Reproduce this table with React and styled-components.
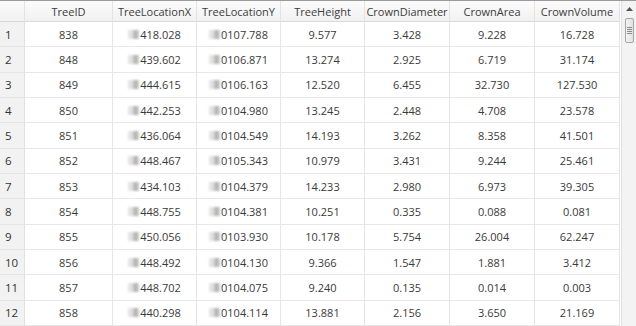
import React from "react";
import styled, { createGlobalStyle } from "styled-components";

const Global = createGlobalStyle`
  html, body { margin: 0; padding: 0; background: #fff; }
  body { font-family: "Open Sans", "Noto Sans", sans-serif; }
`;

const COLS = "25px 88px 84px 84px 84px 85px 85px 85px";

const Frame = styled.div`
  width: 636px;
  height: 326px;
  display: flex;
  flex-direction: column;
  border-top: 1px solid #9a9a9a;
  box-sizing: border-box;
  overflow: hidden;
  color: #3a3a3a;
  font-size: 11px;
`;

const Body = styled.div`
  flex: 1;
  display: flex;
  min-height: 0;
`;

const Grid = styled.div`
  width: 621px;
  display: grid;
  grid-template-columns: ${COLS};
  grid-template-rows: 21px;
  grid-auto-rows: 25.33px;
  align-content: start;
  border-right: 1px solid #e2e2e2;
`;

const HeadCell = styled.div`
  box-sizing: border-box;
  display: flex;
  align-items: center;
  justify-content: center;
  background: linear-gradient(#fbfbfb, #f1f1f1);
  border-right: 1px solid #e3e3e3;
  border-bottom: 1px solid #d9d9d9;
  white-space: nowrap;
  color: #3c3c3c;
`;

const RowHead = styled.div`
  box-sizing: border-box;
  display: flex;
  align-items: center;
  padding-left: 5px;
  background: #f2f2f2;
  border-right: 1px solid #e0e0e0;
  border-bottom: 1px solid #e4e4e4;
  color: #333;
  font-size: 11.5px;
`;

const Cell = styled.div`
  box-sizing: border-box;
  display: flex;
  align-items: center;
  justify-content: center;
  border-right: 1px solid #e6e6e6;
  border-bottom: 1px solid #e8e8e8;
  white-space: nowrap;
  color: #3a3a3a;
`;

const Mask = styled.span`
  display: inline-block;
  width: 11px;
  height: 9px;
  margin-right: 1px;
  background: linear-gradient(
    90deg,
    #e4e4e4 0 35%,
    #d2d2d2 35% 55%,
    #b4b4b4 55% 85%,
    #c8c8c8 85% 100%
  );
  filter: blur(0.8px);
`;

const Scroll = styled.div`
  width: 14px;
  flex-shrink: 0;
  background: #f3f3f3;
  display: flex;
  flex-direction: column;
  align-items: center;
`;

const Arrow = styled.div`
  height: 15px;
  width: 100%;
  display: flex;
  align-items: center;
  justify-content: center;
`;

const Thumb = styled.div`
  margin-top: 2px;
  width: 9px;
  height: 25px;
  box-sizing: border-box;
  border: 1px solid #a6a6a6;
  border-radius: 2px;
  background: linear-gradient(90deg, #f4f4f4, #e2e2e2);
  display: flex;
  flex-direction: column;
  align-items: center;
  justify-content: center;
  gap: 1px;
`;

const Grip = styled.span`
  width: 5px;
  height: 1px;
  background: #8a8a8a;
`;

const headers = [
  "TreeID",
  "TreeLocationX",
  "TreeLocationY",
  "TreeHeight",
  "CrownDiameter",
  "CrownArea",
  "CrownVolume",
];

const rows = [
  ["838", "418.028", "0107.788", "9.577", "3.428", "9.228", "16.728"],
  ["848", "439.602", "0106.871", "13.274", "2.925", "6.719", "31.174"],
  ["849", "444.615", "0106.163", "12.520", "6.455", "32.730", "127.530"],
  ["850", "442.253", "0104.980", "13.245", "2.448", "4.708", "23.578"],
  ["851", "436.064", "0104.549", "14.193", "3.262", "8.358", "41.501"],
  ["852", "448.467", "0105.343", "10.979", "3.431", "9.244", "25.461"],
  ["853", "434.103", "0104.379", "14.233", "2.980", "6.973", "39.305"],
  ["854", "448.755", "0104.381", "10.251", "0.335", "0.088", "0.081"],
  ["855", "450.056", "0103.930", "10.178", "5.754", "26.004", "62.247"],
  ["856", "448.492", "0104.130", "9.366", "1.547", "1.881", "3.412"],
  ["857", "448.702", "0104.075", "9.240", "0.135", "0.014", "0.003"],
  ["858", "440.298", "0104.114", "13.881", "2.156", "3.650", "21.169"],
];

export default function App() {
  return (
    <>
      <Global />
      <Frame>
        <Body>
          <Grid>
            <HeadCell />
            {headers.map((h) => (
              <HeadCell key={h}>{h}</HeadCell>
            ))}
            {rows.map((r, i) => (
              <React.Fragment key={i}>
                <RowHead>{i + 1}</RowHead>
                {r.map((v, j) => (
                  <Cell key={j}>
                    {(j === 1 || j === 2) && <Mask />}
                    {v}
                  </Cell>
                ))}
              </React.Fragment>
            ))}
          </Grid>
          <Scroll>
            <Arrow>
              <svg width="7" height="4" viewBox="0 0 7 4">
                <path d="M0 4 L3.5 0 L7 4 Z" fill="#555" />
              </svg>
            </Arrow>
            <Thumb>
              <Grip />
              <Grip />
              <Grip />
              <Grip />
            </Thumb>
          </Scroll>
        </Body>
      </Frame>
    </>
  );
}
